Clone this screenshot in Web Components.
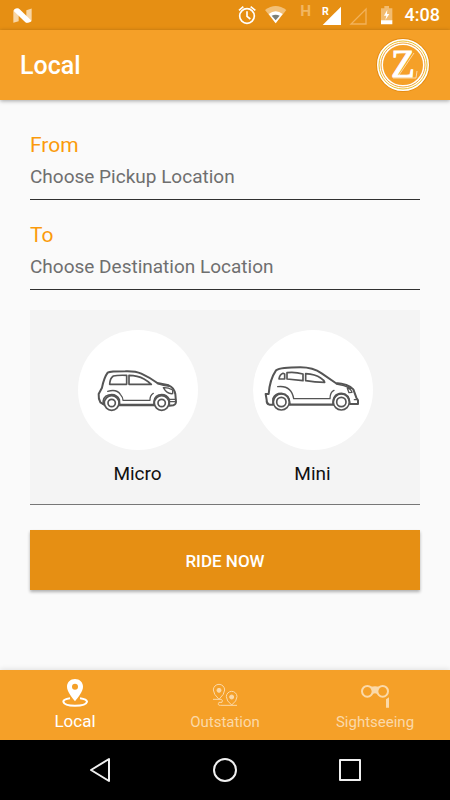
<!DOCTYPE html>
<html lang="en">
<head>
<meta charset="utf-8">
<meta name="viewport" content="width=device-width, initial-scale=1">
<title>Local</title>
<style>
  html { height: 100%; }
  body {
    margin: 0;
    min-height: 100%;
    display: flex;
    flex-direction: column;
    background: #fafafa;
    font-family: Roboto, "Liberation Sans", sans-serif;
    --brand: #f5a028;
    --brand-dark: #e68f13;
  }
  main {
    flex: 1;
    display: flex;
    flex-direction: column;
    gap: 20px;
    padding: 30px;
  }
</style>
</head>
<body>
<status-bar time="4:08"></status-bar>
<app-header>Local</app-header>
<main>
  <location-field label="From" placeholder="Choose Pickup Location"></location-field>
  <location-field label="To" placeholder="Choose Destination Location"></location-field>
  <ride-options>
    <ride-option label="Micro">
      <svg viewBox="8 15 360 360" width="120" height="120" fill="none" stroke="#555" stroke-width="5" stroke-linecap="round" stroke-linejoin="round" aria-hidden="true">
        <path stroke-width="6" d="M85 238 75 232Q69 222 70 207L80 188Q86 158 97 143Q104 139 150 139Q180 138 198 146Q222 157 246 174L280 181Q296 187 300 207L302 231Q301 239 294 241L282 242"/>
        <path stroke-width="7" d="M132 240H236"/>
        <path stroke-width="4" d="M143 226H224Q223 213 234 205M97 199Q124 191 135 208Q143 217 143 226"/>
        <path d="M84 238Q81 215 100 210Q123 205 132 224L133 239M236 239Q234 216 250 210Q272 205 282 223V240"/>
        <circle cx="109" cy="234" r="22"/><circle cx="109" cy="234" r="11"/>
        <circle cx="259" cy="234" r="22"/><circle cx="259" cy="234" r="11"/>
        <path d="M103 178Q104 159 114 153Q126 150 154 151V178ZM161 151Q187 151 206 162Q218 169 228 178H161Z"/>
        <path stroke-width="4" d="M246 176Q264 183 282 184M264 188Q278 187 292 195V206Q275 208 264 188ZM284 223H301M284 230H300"/>
      </svg>
    </ride-option>
    <ride-option label="Mini">
      <svg viewBox="8 15 360 360" width="120" height="120" fill="none" stroke="#555" stroke-width="5" stroke-linecap="round" stroke-linejoin="round" aria-hidden="true">
        <path stroke-width="6" d="M68 239H57Q48 236 49 225L46 207H55Q58 164 77 136Q91 127 150 127Q188 127 214 145L256 174Q293 176 309 193L318 218L323 226V237H299"/>
        <path stroke-width="7" d="M119 239H248"/>
        <path stroke-width="4" d="M82 185Q123 180 130 221H239Q239 201 251 196"/>
        <path d="M68 238V221Q74 205 93 205Q118 207 119 238M248 238Q247 206 273 205Q297 206 299 237"/>
        <circle cx="93" cy="231" r="24"/><circle cx="93" cy="231" r="14"/>
        <circle cx="273" cy="231" r="24"/><circle cx="273" cy="231" r="14"/>
        <path d="M86 162Q88 149 98 145L103 147V162ZM110 143Q134 140 158 147V167L110 162ZM166 146Q195 148 211 159Q221 165 223 172Q193 172 166 167Z"/>
        <path stroke-width="4" d="M291 190Q300 189 305 202L296 203ZM258 177Q281 179 301 190M312 224H319"/>
      </svg>
    </ride-option>
  </ride-options>
  <ride-button>RIDE NOW</ride-button>
</main>
<tab-bar>
  <tab-item label="Local" active>
    <svg viewBox="180 50 90 90" width="30" height="30" fill="none" stroke="#fff" aria-hidden="true">
      <path fill="#fff" stroke="none" fill-rule="evenodd" d="M225 56C211 56 201 66 201 79C201 94 218 113 225 123C232 113 249 94 249 79C249 66 239 56 225 56ZM225 70A9 9 0 1 1 225 88A9 9 0 1 1 225 70Z"/>
      <path stroke-width="6" d="M210 114Q190 117 190 124Q193 136 225 136Q258 136 261 124Q260 117 240 114"/>
    </svg>
  </tab-item>
  <tab-item label="Outstation">
    <svg viewBox="180 60 90 90" width="30" height="30" fill="none" stroke="#fbd9a8" stroke-width="3" aria-hidden="true">
      <path d="M207 118Q190 102 190 90A17 17 0 0 1 224 90Q224 102 207 118ZM245 135Q229 123 229 110A16 16 0 0 1 261 110Q261 123 245 135Z"/>
      <circle cx="207" cy="91" r="6" fill="#fbd9a8"/><circle cx="245" cy="111" r="6" fill="#fbd9a8"/>
      <path d="M189 118H213Q220 120 216 127H207Q201 136 211 136H261"/>
    </svg>
  </tab-item>
  <tab-item label="Sightseeing">
    <svg viewBox="180 60 90 90" width="30" height="30" fill="none" stroke="#fbd9a8" stroke-width="6" aria-hidden="true">
      <circle cx="202" cy="94" r="16"/><circle cx="248" cy="94" r="16"/>
      <path fill="#fbd9a8" stroke="none" d="M212 80Q225 78 238 80L231 101Q225 98 219 101ZM258 118 267 112V143H258Z"/>
    </svg>
  </tab-item>
</tab-bar>
<system-nav></system-nav>

<script>
class BaseElement extends HTMLElement {
  connectedCallback() {
    if (this.shadowRoot) return;
    this.attachShadow({ mode: "open" }).innerHTML = this.render();
  }
}

customElements.define("status-bar", class extends BaseElement {
  render() {
    return `
      <style>
        :host { display: flex; align-items: center; justify-content: space-between; height: 30px; padding: 0 10px 0 12px; background: var(--brand-dark); color: #fff; }
        .right { display: flex; align-items: center; }
        svg { display: block; }
        time { margin-left: 10px; font-size: 18px; line-height: 30px; font-weight: 500; }
      </style>
      <svg viewBox="36 20 63 50" width="21" height="17" aria-hidden="true">
        <path fill="#f8d6a5" d="M40 29 56 24V62L40 67ZM79 29 95 24V62L79 67Z"/>
        <path fill="#fff" d="M43 26Q52 21 59 26L93 59V63Q83 69 76 65L42 32Z"/>
      </svg>
      <div class="right">
        <svg viewBox="36 0 474 90" width="158" height="30" fill="none" aria-hidden="true">
          <g stroke="#fff" stroke-width="5">
            <circle cx="66" cy="48" r="22"/>
            <path d="M66 34V49L76 57M42 31 55 20M77 20 91 31"/>
          </g>
          <path fill="#f2c078" d="M120 30Q152 6 184 30L152 70Z"/>
          <path fill="#fff" d="M131 42Q152 26 173 42L152 70Z"/>
          <path fill="#7c8078" d="M140 47Q152 42 164 47L152 61Z"/>
          <text x="226" y="49" font-size="46" font-weight="700" fill="#f2b660">H</text>
          <text x="291" y="45" font-size="32" font-weight="700" fill="#fff">R</text>
          <path fill="#fff" d="M348 20V75H293Z"/>
          <path stroke="#f2b25b" stroke-width="4" d="M423 27V72H378Z"/>
          <path fill="#f2bc70" d="M468 25H478V18H492V25H502V62H468Z"/>
          <path fill="#fff" d="M468 61H502V73H468ZM487 29 477 47H484L481 60 493 42H486Z"/>
        </svg>
        <time>${this.getAttribute("time")}</time>
      </div>`;
  }
});

customElements.define("app-header", class extends BaseElement {
  render() {
    return `
      <style>
        :host { display: flex; align-items: center; justify-content: space-between; height: 70px; padding: 0 20px; background: var(--brand); color: #fff; box-shadow: 0 1px 4px rgba(0,0,0,.35); }
        h1 { margin: 0; padding-top: 2px; font-size: 25px; line-height: 32px; font-weight: 500; }
        svg { display: block; }
      </style>
      <h1><slot></slot></h1>
      <svg viewBox="0 0 56 56" width="56" height="56" fill="none" role="img" aria-label="Z logo">
        <circle cx="29" cy="28" r="26" stroke="#e48b12" stroke-width="2"/>
        <circle cx="29" cy="28" r="23" stroke="#fff" stroke-width="6"/>
        <circle cx="29" cy="28" r="24" stroke="#ecc02c" stroke-width="1"/>
        <circle cx="29" cy="28" r="22" stroke="#f3a634" stroke-width="1"/>
        <path stroke="#fbd9a8" d="M40 16 25 38M19 41H42L43 34"/>
        <text x="29" y="40" font-family="'Liberation Serif', serif" font-size="39" text-anchor="middle" fill="#fff" stroke="#fff" stroke-width="1">Z</text>
      </svg>`;
  }
});

customElements.define("location-field", class extends BaseElement {
  render() {
    return `
      <style>
        :host { display: flex; flex-direction: column; }
        label { font-size: 21px; line-height: 30px; color: #fa9a0b; }
        input { box-sizing: border-box; width: 100%; height: 40px; margin: 0; padding: 0 0 7px; border: 0; border-bottom: 1px solid #303030; border-radius: 0; outline: 0; background: none; font: 19px Roboto, "Liberation Sans", sans-serif; color: #222; }
        input::placeholder { color: #6f6f6f; opacity: 1; }
      </style>
      <label for="place">${this.getAttribute("label")}</label>
      <input id="place" type="text" placeholder="${this.getAttribute("placeholder")}">`;
  }
});

customElements.define("ride-options", class extends BaseElement {
  render() {
    return `
      <style>
        :host { display: grid; grid-template-columns: 1fr 1fr; padding: 20px 20px 18px; background: #f4f4f4; border-bottom: 1px solid #777; }
      </style>
      <slot></slot>`;
  }
});

customElements.define("ride-option", class extends BaseElement {
  render() {
    return `
      <style>
        :host { display: flex; justify-content: center; }
        button { display: flex; flex-direction: column; align-items: center; gap: 12px; padding: 0; border: 0; background: none; font: 19px/24px Roboto, "Liberation Sans", sans-serif; color: #111; cursor: pointer; }
        .disc { display: block; width: 120px; height: 120px; border-radius: 50%; background: #fff; }
      </style>
      <button type="button"><span class="disc"><slot></slot></span>${this.getAttribute("label")}</button>`;
  }
});

customElements.define("ride-button", class extends BaseElement {
  render() {
    return `
      <style>
        :host { display: block; padding-top: 5px; }
        button { display: block; width: 100%; height: 60px; padding: 2px 0 0; border: 0; background: var(--brand-dark); box-shadow: 0 2px 3px rgba(0,0,0,.3); font: 500 17px/24px Roboto, "Liberation Sans", sans-serif; color: #fff; cursor: pointer; }
      </style>
      <button type="button"><slot></slot></button>`;
  }
});

customElements.define("tab-bar", class extends BaseElement {
  render() {
    return `
      <style>
        :host { display: block; background: var(--brand); box-shadow: 0 -1px 5px rgba(0,0,0,.1); }
        nav { display: grid; grid-template-columns: repeat(3, 1fr); height: 70px; }
      </style>
      <nav aria-label="Ride type"><slot></slot></nav>`;
  }
});

customElements.define("tab-item", class extends BaseElement {
  render() {
    return `
      <style>
        :host { display: block; }
        a { box-sizing: border-box; display: flex; flex-direction: column; align-items: center; gap: 2px; height: 70px; padding-top: 10px; font-size: 15px; line-height: 20px; color: #fbd9a8; text-decoration: none; }
        :host([active]) a { padding-top: 7px; gap: 4px; font-size: 17px; color: #fff; }
      </style>
      <a href="#${this.getAttribute("label").toLowerCase()}"><slot></slot><span>${this.getAttribute("label")}</span></a>`;
  }
});

customElements.define("system-nav", class extends BaseElement {
  render() {
    return `
      <style>
        :host { display: flex; justify-content: center; gap: 65px; height: 60px; background: #000; }
        button { display: flex; align-items: center; justify-content: center; width: 60px; padding: 0; border: 0; background: none; cursor: pointer; }
        svg { display: block; fill: none; stroke: #f0f0f0; stroke-width: 2; stroke-linejoin: round; }
      </style>
      <button type="button" aria-label="Back"><svg viewBox="0 0 30 30" width="30" height="30"><path d="M24 4V26L6 15Z"/></svg></button>
      <button type="button" aria-label="Home"><svg viewBox="0 0 30 30" width="30" height="30"><circle cx="15" cy="15" r="11"/></svg></button>
      <button type="button" aria-label="Recent apps"><svg viewBox="0 0 30 30" width="30" height="30"><rect x="5" y="5" width="20" height="20"/></svg></button>`;
  }
});
</script>
</body>
</html>
